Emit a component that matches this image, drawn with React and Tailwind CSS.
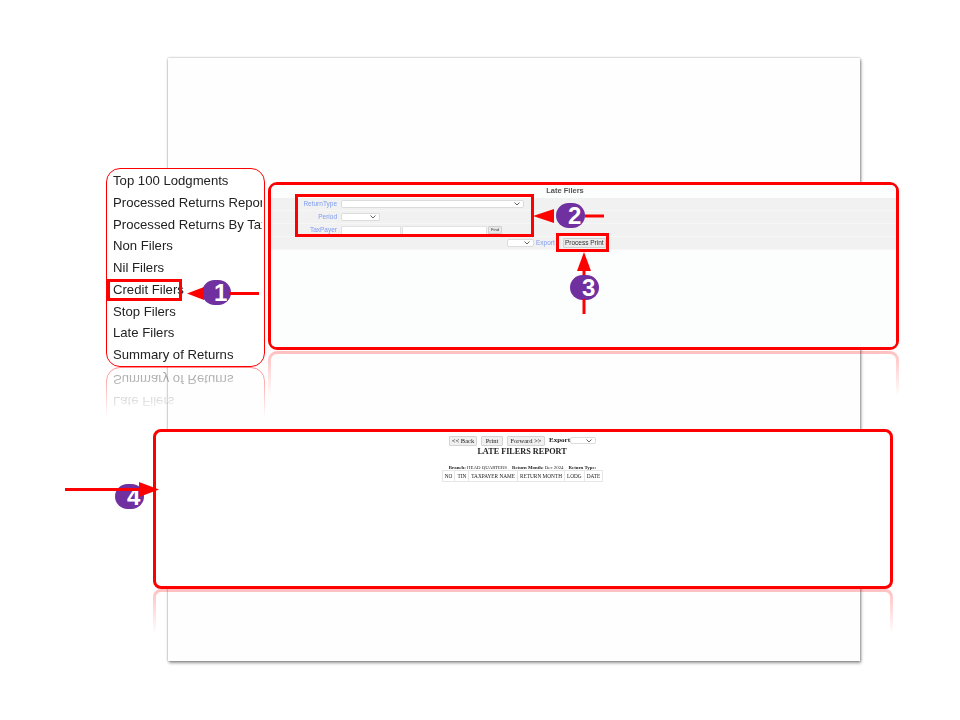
const menuItems = [
  'Top 100 Lodgments',
  'Processed Returns Report',
  'Processed Returns By Tax',
  'Non Filers',
  'Nil Filers',
  'Credit Filers',
  'Stop Filers',
  'Late Filers',
  'Summary of Returns',
];

const MiniSelect = ({ className }) => (
  <div className={`flex items-center justify-end bg-white border border-[#dcdcdc] rounded-[2px] pr-[3px] ${className}`}>
    <svg width="6" height="4" viewBox="0 0 6 4" fill="none" stroke="#666" strokeWidth="1">
      <path d="M0.5 0.5 L3 3 L5.5 0.5" />
    </svg>
  </div>
);

const Badge = ({ n, className }) => (
  <div
    className={`absolute w-[29px] h-[25px] pl-[12px] rounded-full bg-[#7030a0] text-white font-bold text-[24px] leading-[25px] text-left overflow-hidden font-['Liberation_Sans',sans-serif] ${className}`}
  >
    {n}
  </div>
);

const Mark = ({ className }) => (
  <div className={`absolute border-[3px] border-[#ff0000] ${className}`} />
);

const MenuList = () => (
  <ul className="w-[155px] overflow-hidden pl-[6px] pt-[1px] blur-[0.3px]">
    {menuItems.map((item) => (
      <li key={item} className="h-[21.75px] leading-[21.75px] whitespace-nowrap text-[13.15px] text-[#222]">
        {item}
      </li>
    ))}
  </ul>
);

const FilterPanel = () => (
  <div className="w-full h-full bg-[#fcfdfd] rounded-[5px] overflow-hidden flex flex-col font-['Liberation_Sans',sans-serif] blur-[0.4px]">
    <div className="h-[13px] text-center text-[7.5px] font-bold leading-[11px] text-[#555] pr-[37px]">Late Filers</div>
    <div className="bg-[#f1f1f1] flex flex-col text-[6.5px] text-[#7f9cf0]">
      <div className="h-[13px] flex items-center border-b border-[#f6f6f6]">
        <span className="w-[66px] text-right">ReturnType</span>
        <MiniSelect className="w-[183px] h-[8px] ml-[4px]" />
      </div>
      <div className="h-[13px] flex items-center border-b border-[#f6f6f6]">
        <span className="w-[66px] text-right">Period</span>
        <MiniSelect className="w-[39px] h-[8px] ml-[4px]" />
      </div>
      <div className="h-[13px] flex items-center border-b border-[#f6f6f6]">
        <span className="w-[66px] text-right">TaxPayer</span>
        <div className="w-[60px] h-[9px] ml-[4px] bg-white border border-[#e2e2e2]" />
        <div className="w-[85px] h-[9px] ml-[1px] bg-white border border-[#e2e2e2]" />
        <div className="w-[14px] h-[8px] ml-[1px] bg-[#e8e8e8] border border-[#d0d0d0] rounded-[1px] text-[4px] leading-[6px] text-center text-[#333]">Find</div>
      </div>
      <div className="h-[13px] flex items-center border-b border-[#f6f6f6]">
        <MiniSelect className="w-[27px] h-[8px] ml-[236px]" />
        <span className="ml-[2px]">Export</span>
        <div className="w-[43px] h-[10px] ml-[8px] bg-[#ececec] border border-[#cfcfcf] rounded-[1px] text-[6.5px] leading-[8px] text-center text-[#333]">Process Print</div>
      </div>
    </div>
  </div>
);

const ReportHeader = () => (
  <div className="flex flex-col items-center font-['Liberation_Serif',serif] text-[#222] blur-[0.4px] pt-[3px] pr-[1px]">
    <div className="flex items-center h-[11px] text-[6.5px]">
      <div className="w-[28px] h-[10px] bg-[#f0f0f0] border border-[#d4d4d4] rounded-[1px] leading-[8px] text-center">&lt;&lt; Back</div>
      <div className="w-[22px] h-[10px] ml-[4px] bg-[#f0f0f0] border border-[#d4d4d4] rounded-[1px] leading-[8px] text-center">Print</div>
      <div className="w-[38px] h-[10px] ml-[4px] bg-[#f0f0f0] border border-[#d4d4d4] rounded-[1px] leading-[8px] text-center">Forward &gt;&gt;</div>
      <span className="ml-[4px] font-bold text-[7px]">Export</span>
      <MiniSelect className="w-[26px] h-[7px]" />
    </div>
    <div className="font-bold text-[8.2px] leading-[11px] pr-[1px]">LATE FILERS REPORT</div>
    <div className="text-[4.85px] leading-[7px] mt-[7px] flex gap-[5px] h-[6px]">
      <span><b>Branch:</b> HEAD QUARTERS</span>
      <span><b>Return Month:</b> Dec 2024</span>
      <span><b>Return Type:</b></span>
    </div>
    <table className="text-[5.3px] leading-[8px] border-collapse">
      <tbody>
        <tr>
          {['NO', 'TIN', 'TAXPAYER NAME', 'RETURN MONTH', 'LODG', 'DATE'].map((h) => (
            <td key={h} className="border border-[#e6e6e6] px-[2px] h-[11px] whitespace-nowrap">{h}</td>
          ))}
        </tr>
      </tbody>
    </table>
  </div>
);

export default function App() {
  return (
    <div className="relative w-[960px] h-[720px] bg-white overflow-hidden font-['Liberation_Sans',sans-serif]">
      {/* slide page */}
      <div className="absolute left-[168px] top-[58px] w-[692px] h-[603px] bg-[#fefefe] shadow-[0_0_2px_rgba(0,0,0,0.35),1px_2px_3px_rgba(0,0,0,0.4)]" />

      {/* menu + reflection */}
      <div className="absolute left-[106px] top-[168px] w-[159px] h-[199px] bg-white border border-[#ff0000] rounded-[14px] overflow-hidden">
        <MenuList />
      </div>
      <div className="absolute left-[106px] top-[367px] w-[159px] h-[50px] overflow-hidden [mask-image:linear-gradient(to_bottom,rgba(0,0,0,0.45),transparent)]">
        <div className="w-[159px] h-[199px] border border-[#ff0000] rounded-[14px] overflow-hidden -scale-y-100">
          <MenuList />
        </div>
      </div>

      {/* filter panel + reflection */}
      <div className="absolute left-[268px] top-[182px] w-[631px] h-[168px] border-[3px] border-[#ff0000] rounded-[9px] bg-white">
        <FilterPanel />
      </div>
      <div className="absolute left-[268px] top-[351px] w-[631px] h-[45px] overflow-hidden [mask-image:linear-gradient(to_bottom,rgba(0,0,0,0.25),transparent)]">
        <div className="w-[631px] h-[168px] border-[3px] border-[#ff0000] rounded-[9px] -scale-y-100" />
      </div>

      {/* report + reflection */}
      <div className="absolute left-[153px] top-[429px] w-[740px] h-[160px] border-[3px] border-[#ff0000] rounded-[8px] bg-white">
        <ReportHeader />
      </div>
      <div className="absolute left-[153px] top-[589px] w-[740px] h-[45px] overflow-hidden [mask-image:linear-gradient(to_bottom,rgba(0,0,0,0.25),transparent)]">
        <div className="w-[740px] h-[160px] border-[3px] border-[#ff0000] rounded-[8px] -scale-y-100" />
      </div>

      {/* highlights */}
      <Mark className="left-[107px] top-[279px] w-[75px] h-[22px]" />
      <Mark className="left-[295px] top-[194px] w-[239px] h-[43px]" />
      <Mark className="left-[556px] top-[233px] w-[53px] h-[19px]" />

      {/* badges */}
      <Badge n="4" className="left-[115px] top-[484px]" />
      <Badge n="1" className="left-[202px] top-[280px]" />
      <Badge n="2" className="left-[556px] top-[203px]" />
      <Badge n="3" className="left-[570px] top-[275px]" />

      {/* arrows */}
      <svg className="absolute left-0 top-0 pointer-events-none" width="960" height="720" fill="#ff0000" stroke="#ff0000">
        <line x1="259" y1="293.5" x2="229" y2="293.5" strokeWidth="3" />
        <polygon points="187,293.5 204,287 204,300" stroke="none" />
        <line x1="604" y1="216" x2="585" y2="216" strokeWidth="3" />
        <polygon points="533,216 554,209 554,223" stroke="none" />
        <line x1="584" y1="314" x2="584" y2="299" strokeWidth="3" />
        <line x1="584" y1="275" x2="584" y2="268" strokeWidth="3" />
        <polygon points="584,252 577,271 591,271" stroke="none" />
        <line x1="65" y1="489.5" x2="145" y2="489.5" strokeWidth="3" />
        <polygon points="159,489.5 139,482 139,497" stroke="none" />
      </svg>
    </div>
  );
}
